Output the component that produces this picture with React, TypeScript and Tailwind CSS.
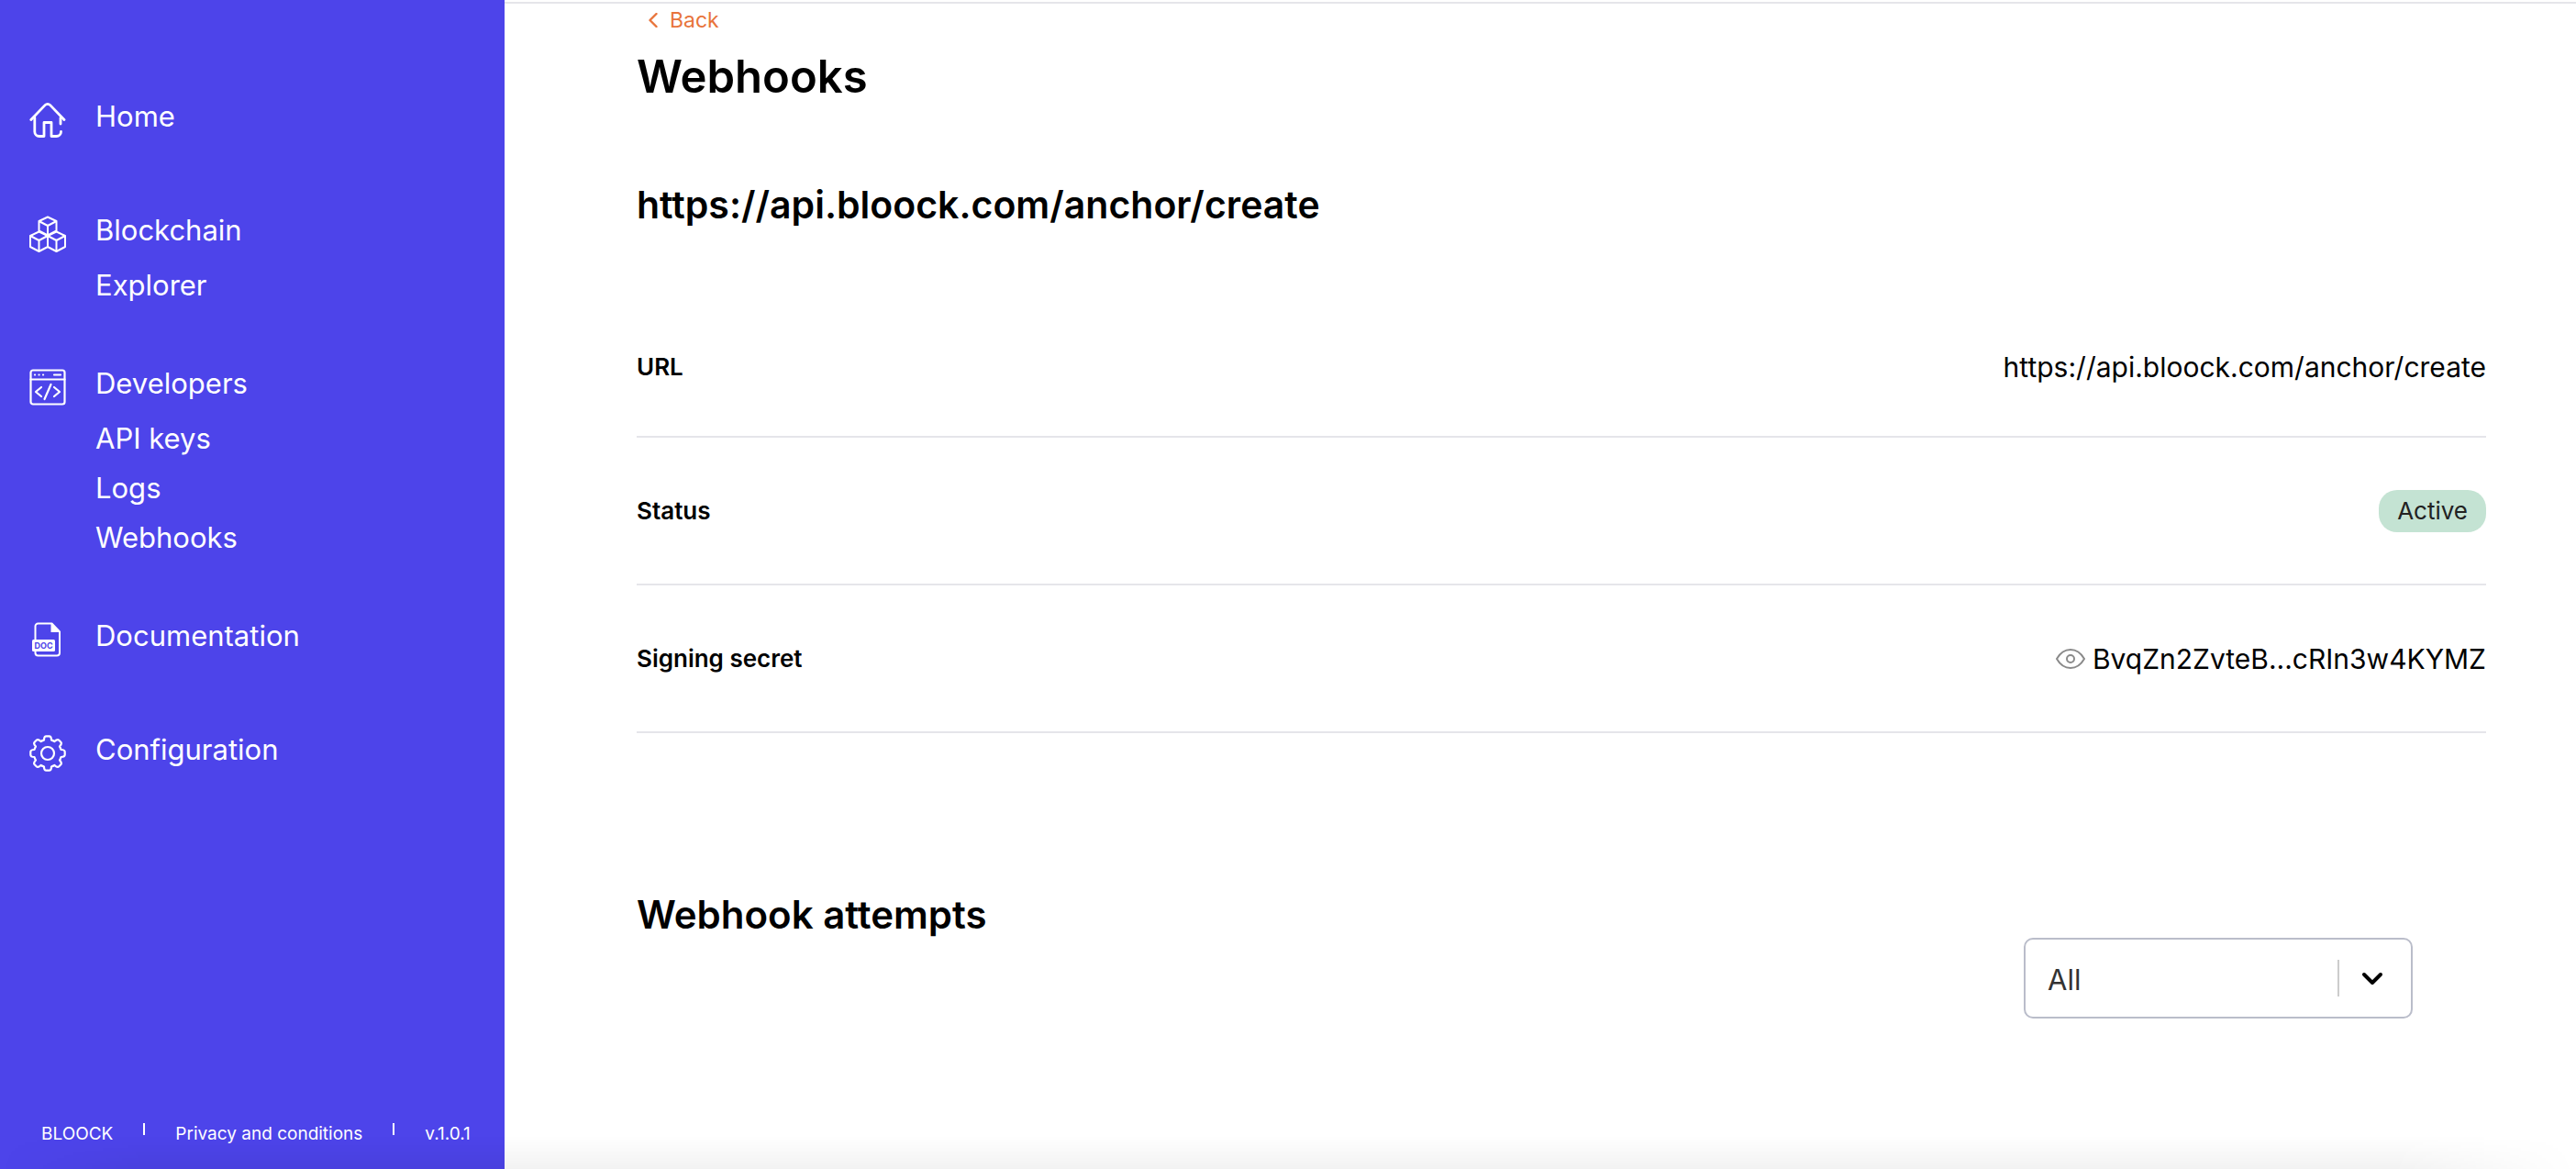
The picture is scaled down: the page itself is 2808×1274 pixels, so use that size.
import React from "react";

function HomeIcon() {
  return (
    <svg className="size-10 shrink-0" viewBox="0 0 40 40" fill="none" stroke="currentColor" strokeWidth="2.8" strokeLinecap="round" strokeLinejoin="round" aria-hidden="true">
      <path d="M1.800 19.500 17.300 3.400a3.600 3.600 0 0 1 5.200 0L38 19.500" />
      <path d="M5.800 17v15.500a5 5 0 0 0 5 5H16V22.500h8v15h5.500a5 5 0 0 0 5-5" />
      <path d="M34 17.500v6.500" />
    </svg>
  );
}

function CubesIcon() {
  return (
    <svg className="size-10 shrink-0" viewBox="0 0 40 40" fill="none" stroke="currentColor" strokeWidth="2" strokeLinejoin="round" aria-hidden="true">
      <path d="M20 1.500 29.500 6v10.500L20 21.500 10.500 16.500V6Z" />
      <path d="M10.500 6 20 11l9.500-5M20 11v10.500" />
      <path d="M10.500 17.500 20 22v12L10.500 39 1 34V22Z" />
      <path d="M1 22l9.500 5 9.500-5M10.500 27v12" />
      <path d="M29.500 17.500 39 22v12l-9.500 5-9.500-5V22Z" />
      <path d="m20 22 9.500 5 9.500-5M29.500 27v12" />
    </svg>
  );
}

function CodeWindowIcon() {
  return (
    <svg className="size-10 shrink-0" viewBox="0 0 40 40" fill="none" stroke="currentColor" strokeWidth="2.200" strokeLinecap="round" strokeLinejoin="round" aria-hidden="true">
      <rect x="1.500" y="1.500" width="37" height="37" rx="2.500" />
      <path d="M1.500 11.500h37" />
      <path d="M6 6.500h.1M10.500 6.500h.1M15 6.500h.1M27 6.500h7" />
      <path d="m13 20-6 5 6 5M27 20l6 5-6 5M23.500 17l-7 16" />
    </svg>
  );
}

function DocIcon() {
  return (
    <svg className="size-10 shrink-0" viewBox="0 0 40 40" fill="none" stroke="currentColor" strokeWidth="2" strokeLinejoin="round" aria-hidden="true">
      <path d="M6.500 21V5.500a3 3 0 0 1 3-3h15l8.500 9v23a3 3 0 0 1-3 3H9.500a3 3 0 0 1-3-3V33" />
      <path d="M23.500 2.500h1.500l8 8.500v1h-9.500Z" fill="currentColor" stroke="none" />
      <rect x="3" y="20" width="25" height="13" rx="1.500" fill="currentColor" stroke="none" />
      <text x="15.500" y="29.500" textAnchor="middle" fontSize="9" fontWeight="700" fill="#4d44ea" stroke="none">DOC</text>
    </svg>
  );
}

function GearIcon() {
  return (
    <svg className="size-10 shrink-0" viewBox="0 0 40 40" fill="none" stroke="currentColor" strokeWidth="2.200" strokeLinejoin="round" aria-hidden="true">
      <path d="M16 5.500 C16 2.500 17 1.300 18.500 1.300 h3 C23 1.300 24 2.500 24 5.500 C25.500 6 26.500 6.300 27.500 7 C29.700 4.900 31.200 4.700 32.300 5.700 l2 2 C35.300 8.800 35.100 10.300 33 12.500 C33.700 13.500 34 14.500 34.500 16 C37.500 16 38.700 17 38.700 18.500 v3 C38.700 23 37.500 24 34.500 24 C34 25.500 33.700 26.500 33 27.500 C35.100 29.700 35.300 31.200 34.300 32.300 l-2 2 C31.200 35.300 29.700 35.100 27.500 33 C26.500 33.700 25.500 34 24 34.500 C24 37.500 23 38.700 21.500 38.700 h-3 C17 38.700 16 37.500 16 34.500 C14.500 34 13.500 33.700 12.500 33 C10.300 35.100 8.800 35.300 7.700 34.300 l-2-2 C4.700 31.200 4.900 29.700 7 27.500 C6.300 26.500 6 25.500 5.500 24 C2.500 24 1.300 23 1.300 21.500 v-3 C1.300 17 2.500 16 5.500 16 C6 14.500 6.300 13.500 7 12.500 C4.900 10.300 4.700 8.800 5.700 7.700 l2-2 C8.800 4.700 10.300 4.900 12.500 7 C13.500 6.300 14.500 6 16 5.500Z" />
      <circle cx="20" cy="20" r="7" />
    </svg>
  );
}

function Group({ icon, label, links = [] }: { icon: React.ReactNode; label: string; links?: string[] }) {
  return (
    <li className="flex min-h-[57px] items-start gap-8 text-white">
      <span className="pt-1">{icon}</span>
      <div className="text-[31px] leading-[40px]">
        <a href="#" className="block">{label}</a>
        {links.length > 0 && (
          <ul className="mt-5 flex flex-col gap-[14px]">
            {links.map((l) => (
              <li key={l}><a href="#" className="block">{l}</a></li>
            ))}
          </ul>
        )}
      </div>
    </li>
  );
}

function Row({ label, children }: { label: string; children: React.ReactNode }) {
  return (
    <div className="flex h-[161px] items-center justify-between border-b-2 border-[#e5e5ea] first:h-[153px]">
      <dt className="text-[26px] leading-[36px] font-semibold">{label}</dt>
      <dd className="flex items-center text-[30px] leading-[40px]">{children}</dd>
    </div>
  );
}

export default function App() {
  return (
    <div className="relative flex min-h-screen bg-white font-['Inter',sans-serif] text-black">
      <aside className="flex w-[550px] shrink-0 flex-col justify-between bg-[#4d44ea] pt-[107px] pb-[22px]">
        <nav aria-label="Main">
          <ul className="flex flex-col gap-[67px] pl-8">
            <Group icon={<HomeIcon />} label="Home" />
            <Group icon={<CubesIcon />} label="Blockchain" links={["Explorer"]} />
            <Group icon={<CodeWindowIcon />} label="Developers" links={["API keys", "Logs", "Webhooks"]} />
            <Group icon={<DocIcon />} label="Documentation" />
            <Group icon={<GearIcon />} label="Configuration" />
          </ul>
        </nav>
        <footer className="flex items-start gap-[33px] pl-[45px] text-[19px] leading-[32px] text-white">
          <a href="#">BLOOCK</a>
          <span className="mt-1 h-[13px] w-0.5 bg-white" />
          <a href="#">Privacy and conditions</a>
          <span className="mt-1 h-[13px] w-0.5 bg-white" />
          <span>v.1.0.1</span>
        </footer>
      </aside>
      <main className="mt-0.5 flex-1 border-t-2 border-[#e5e5ea] pr-[98px] pl-36">
        <a href="#" className="mt-0.5 ml-3 flex w-fit items-center gap-3 text-[23px] leading-[32px] text-[#e8743b]">
          <svg className="h-4 w-3" viewBox="0 0 12 16" fill="none" stroke="currentColor" strokeWidth="2.400" strokeLinecap="round" strokeLinejoin="round" aria-hidden="true">
            <path d="M9.500 1 2.500 8l7 7" />
          </svg>
          Back
        </a>
        <h1 className="mt-4 text-[49px] leading-[60px] font-semibold">Webhooks</h1>
        <h2 className="mt-[83px] text-[41px] leading-[52px] font-semibold">https://api.bloock.com/anchor/create</h2>
        <dl className="mt-[75px]">
          <Row label="URL">https://api.bloock.com/anchor/create</Row>
          <Row label="Status">
            <span className="rounded-[20px] bg-[#c4e3d3] px-5 py-1 text-[26px] leading-[38px] text-[#222]">Active</span>
          </Row>
          <Row label="Signing secret">
            <button type="button" aria-label="Show secret" className="mr-2">
              <svg className="size-8" viewBox="0 0 32 32" fill="none" stroke="#8a8a8a" strokeWidth="2" aria-hidden="true">
                <path d="M1 16C5 9 10 6 16 6s11 3 15 10c-4 7-9 10-15 10S5 23 1 16Z" />
                <circle cx="16" cy="16" r="4" />
              </svg>
            </button>
            BvqZn2ZvteB...cRIn3w4KYMZ
          </Row>
        </dl>
        <h2 className="mt-[173px] text-[42px] leading-[50px] font-semibold">Webhook attempts</h2>
        <div className="mr-20 flex justify-end">
          <div className="relative w-[424px]">
            <select aria-label="Attempt status" className="h-[88px] w-full appearance-none rounded-[10px] border-2 border-[#babdca] bg-white pt-1 pl-6 text-[31px] text-[#333]">
              <option>All</option>
            </select>
            <span className="pointer-events-none absolute inset-y-0 right-0 flex items-center gap-[20px] pr-7">
              <span className="h-10 w-0.5 bg-[#ccc]" />
              <svg className="size-8" viewBox="0 0 32 32" fill="none" stroke="#000" strokeWidth="4" strokeLinecap="round" strokeLinejoin="round" aria-hidden="true">
                <path d="m7 12 9 9 9-9" />
              </svg>
            </span>
          </div>
        </div>
      </main>
      <div className="pointer-events-none absolute inset-x-0 bottom-0 h-9 bg-linear-to-b from-transparent to-black/5 [mask-image:linear-gradient(to_right,transparent,black_160px,black_calc(100%-200px),transparent)]" />
    </div>
  );
}
